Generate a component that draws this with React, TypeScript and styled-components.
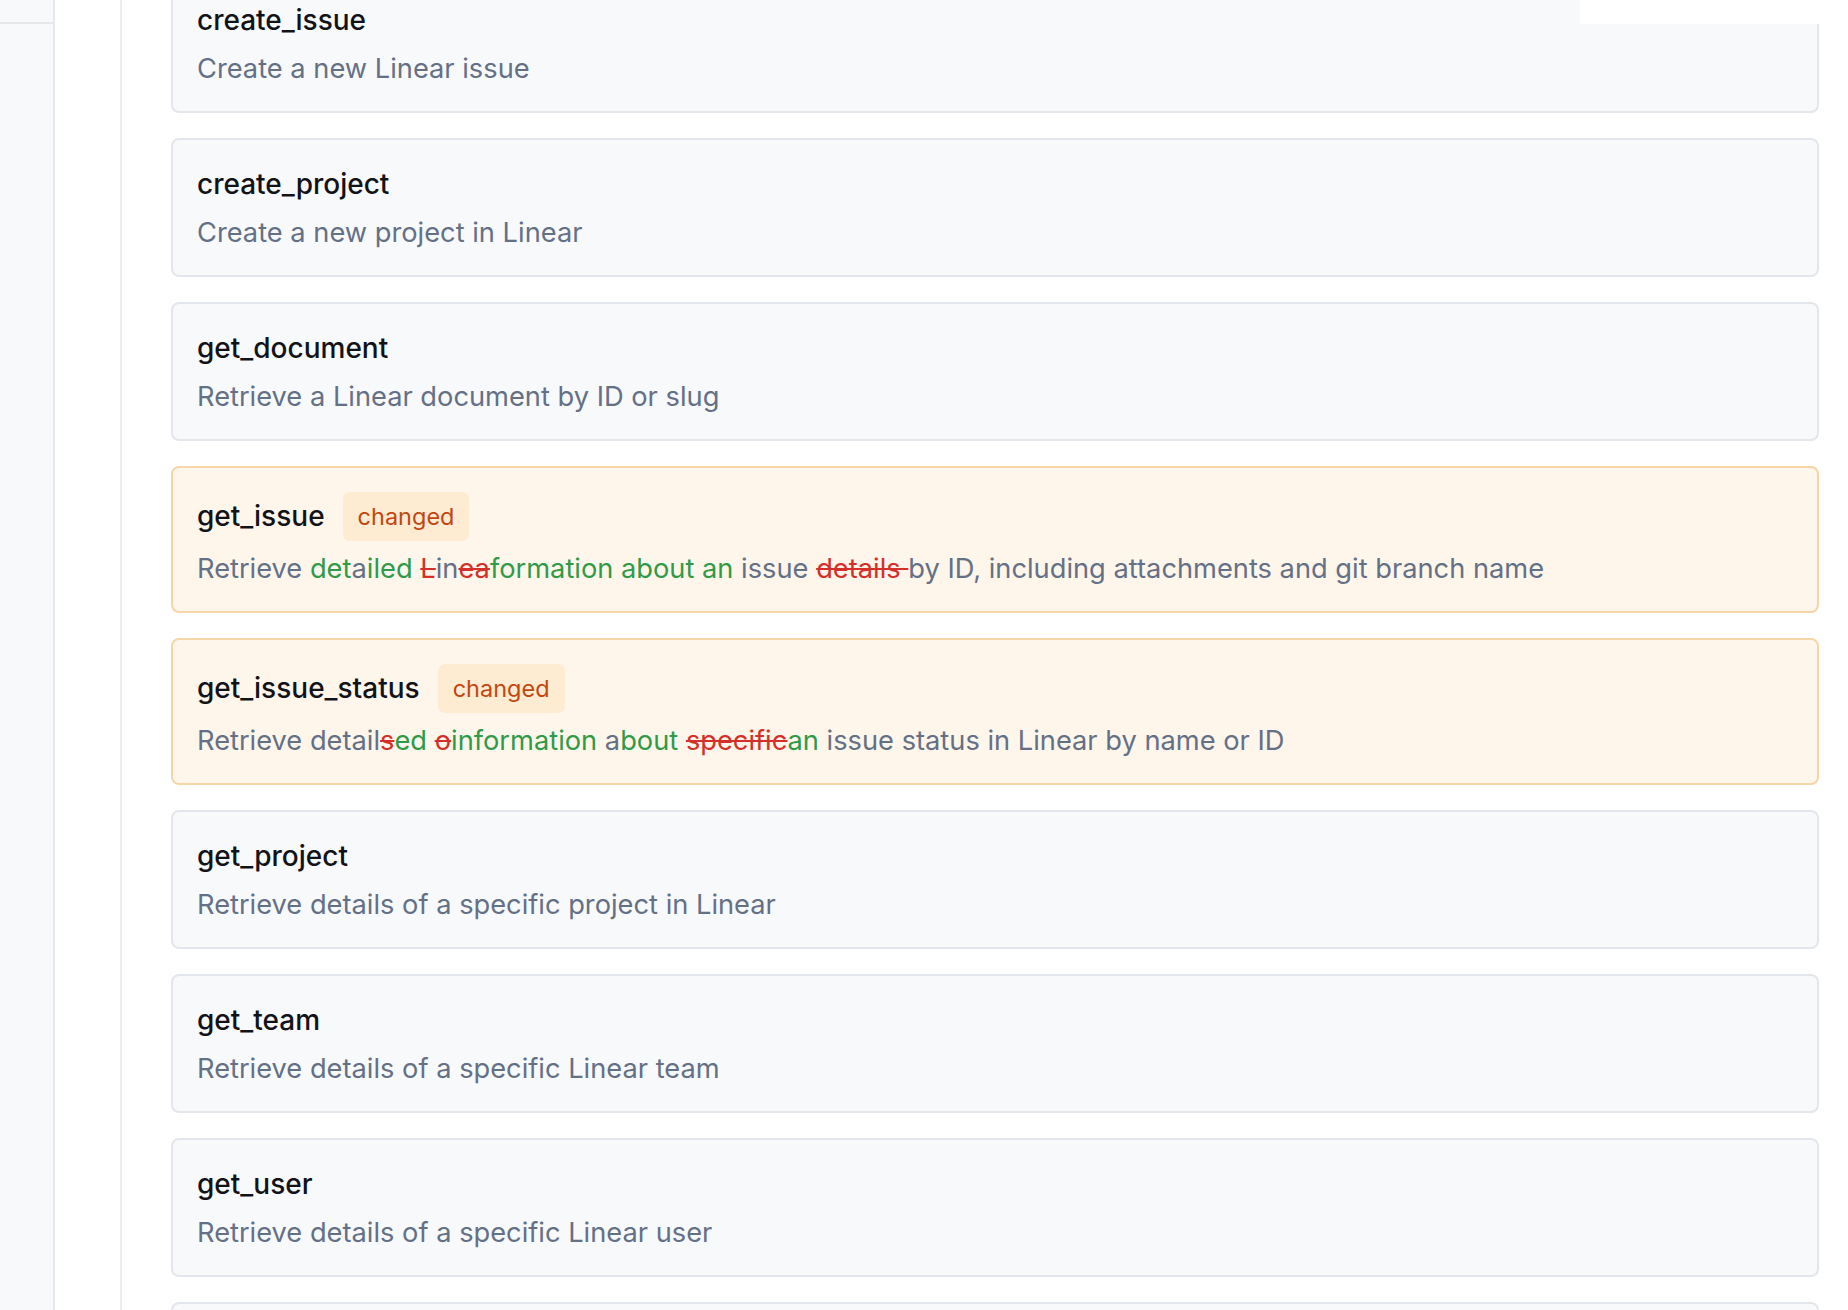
import styled, { createGlobalStyle } from "styled-components";

const GlobalStyle = createGlobalStyle`
  html, body {
    margin: 0;
    padding: 0;
    background: #ffffff;
    font-family: Inter, "Noto Sans", "Liberation Sans", sans-serif;
  }
  * { box-sizing: border-box; }
`;

const Shell = styled.div`
  display: flex;
  height: 100vh;
  overflow: hidden;
`;

const Sidebar = styled.aside`
  width: 55px;
  flex-shrink: 0;
  background: #f8f9fb;
  border-right: 2px solid #e6e8ec;
`;

const SidebarHeader = styled.div`
  height: 24px;
  border-bottom: 2px solid #e6e8ec;
`;

const Gutter = styled.div`
  width: 67px;
  flex-shrink: 0;
  border-right: 2px solid #eceef2;
`;

const Main = styled.main`
  position: relative;
  flex: 1;
  overflow: hidden;
  padding: 0 29px 0 49px;
`;

// white strip of the sticky toolbar that sits over the list
const TopCover = styled.div`
  position: absolute;
  top: 0;
  right: 0;
  width: 268px;
  height: 24px;
  background: #ffffff;
`;

const ToolList = styled.div`
  display: flex;
  flex-direction: column;
  gap: 24.5px;
  margin-top: -26.5px;
`;

const Card = styled.div<{ $changed?: boolean }>`
  padding: 24px;
  border-radius: 8px;
  border: 2px solid ${p => (p.$changed ? "#f6d6a6" : "#e3e6eb")};
  background: ${p => (p.$changed ? "#fef6eb" : "#f8f9fb")};
`;

const Header = styled.div`
  display: flex;
  align-items: center;
  gap: 18px;
`;

const Name = styled.div`
  font-size: 28px;
  line-height: 41px;
  font-weight: 500;
  color: #111318;
`;

const Badge = styled.span`
  display: inline-flex;
  align-items: center;
  height: 49px;
  padding: 0 15px;
  border-radius: 7px;
  background: #fdebd2;
  color: #c2470f;
  font-size: 23.5px;
`;

const Description = styled.div`
  margin-top: 9px;
  font-size: 27.25px;
  line-height: 37.5px;
  color: #647086;
  white-space: nowrap;
`;

const Ins = styled.span`
  color: #2f9b48;
`;

const Del = styled.span`
  color: #d3302a;
  text-decoration: line-through;
  text-decoration-color: #d3302a;
`;

type Part = [("eq" | "ins" | "del"), string];

interface Tool {
  name: string;
  description?: string;
  diff?: Part[];
}

const tools: Tool[] = [
  { name: "create_issue", description: "Create a new Linear issue" },
  { name: "create_project", description: "Create a new project in Linear" },
  { name: "get_document", description: "Retrieve a Linear document by ID or slug" },
  {
    name: "get_issue",
    diff: [
      ["eq", "Retrieve "],
      ["ins", "det"],
      ["eq", "a"],
      ["ins", "iled"],
      ["eq", " "],
      ["del", "L"],
      ["eq", "in"],
      ["del", "ea"],
      ["ins", "formation about an"],
      ["eq", " issue "],
      ["del", "details "],
      ["eq", "by ID, including attachments and git branch name"],
    ],
  },
  {
    name: "get_issue_status",
    diff: [
      ["eq", "Retrieve detail"],
      ["del", "s"],
      ["ins", "ed"],
      ["eq", " "],
      ["del", "o"],
      ["ins", "information"],
      ["eq", " a"],
      ["ins", "bout"],
      ["eq", " "],
      ["del", "specific"],
      ["ins", "an"],
      ["eq", " issue status in Linear by name or ID"],
    ],
  },
  { name: "get_project", description: "Retrieve details of a specific project in Linear" },
  { name: "get_team", description: "Retrieve details of a specific Linear team" },
  { name: "get_user", description: "Retrieve details of a specific Linear user" },
  { name: "list_comments", description: "List comments for a specific Linear issue" },
];

function DiffText({ parts }: { parts: Part[] }) {
  return (
    <>
      {parts.map(([kind, text], i) => {
        if (kind === "ins") return <Ins key={i}>{text}</Ins>;
        if (kind === "del") return <Del key={i}>{text}</Del>;
        return <span key={i}>{text}</span>;
      })}
    </>
  );
}

export default function App() {
  return (
    <>
      <GlobalStyle />
      <Shell>
        <Sidebar>
          <SidebarHeader />
        </Sidebar>
        <Gutter />
        <Main>
          <ToolList>
            {tools.map(tool => (
              <Card key={tool.name} $changed={!!tool.diff}>
                <Header>
                  <Name>{tool.name}</Name>
                  {tool.diff && <Badge>changed</Badge>}
                </Header>
                <Description>
                  {tool.diff ? <DiffText parts={tool.diff} /> : tool.description}
                </Description>
              </Card>
            ))}
          </ToolList>
          <TopCover />
        </Main>
      </Shell>
    </>
  );
}
